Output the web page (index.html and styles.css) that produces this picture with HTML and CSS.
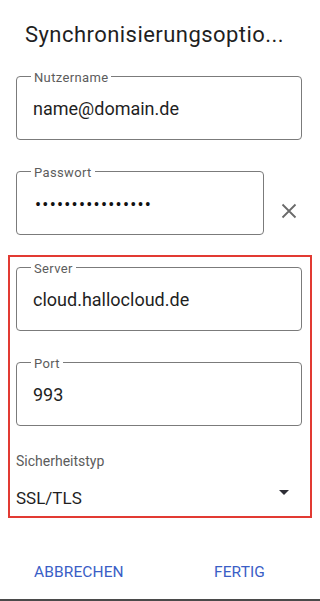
FILE: index.html
```html
<!DOCTYPE html>
<html lang="de">
<head>
<meta charset="utf-8">
<title>Synchronisierungsoptionen</title>
<link rel="stylesheet" href="styles.css">
</head>
<body>
<div class="dialog">
  <h1 class="title">Synchronisierungsoptio...</h1>

  <div class="form">
    <div class="field field-wide">
      <span class="field-label">Nutzername</span>
      <span class="field-value">name@domain.de</span>
    </div>

    <div class="row-pass">
      <div class="field field-narrow">
        <span class="field-label">Passwort</span>
        <span class="field-value dots">••••••••••••••••</span>
      </div>
      <button class="clear" aria-label="Löschen">
        <svg width="16" height="16" viewBox="0 0 16 16"><path d="M1.5 1.5 L14.5 14.5 M14.5 1.5 L1.5 14.5" stroke="#6a6a6a" stroke-width="1.8" fill="none"/></svg>
      </button>
    </div>
  </div>

  <div class="highlight">
    <div class="field field-wide">
      <span class="field-label">Server</span>
      <span class="field-value">cloud.hallocloud.de</span>
    </div>
    <div class="field field-wide gap-top">
      <span class="field-label">Port</span>
      <span class="field-value">993</span>
    </div>
    <div class="select-label">Sicherheitstyp</div>
    <div class="select">
      <span class="select-value">SSL/TLS</span>
      <span class="caret"></span>
    </div>
  </div>

  <div class="actions">
    <button class="action">ABBRECHEN</button>
    <button class="action">FERTIG</button>
  </div>

  <div class="bottom-bar"></div>
</div>
</body>
</html>
```

FILE: styles.css
```css
* { box-sizing: border-box; }

html, body {
  margin: 0;
  padding: 0;
  background: #ffffff;
}

body {
  font-family: Roboto, "Noto Sans", "Liberation Sans", sans-serif;
  color: #1f1f1f;
}

.dialog {
  display: flex;
  flex-direction: column;
  height: 601px;
}

.title {
  margin: 0;
  padding: 21px 0 0 25px;
  font-size: 22px;
  line-height: 28px;
  font-weight: 400;
  letter-spacing: 0.45px;
  color: #1f1f1f;
}

.form {
  padding: 27px 0 0 16px;
}

.field {
  position: relative;
  height: 64px;
  border: 1px solid #7b7b7b;
  border-radius: 4px;
  display: flex;
  align-items: center;
  padding: 0 0 0 16px;
}

.field-wide { width: 286px; }
.field-narrow { width: 248px; }

.field-label {
  position: absolute;
  top: -7px;
  left: 14px;
  padding: 0 3px;
  background: #ffffff;
  font-size: 13px;
  line-height: 16px;
  letter-spacing: 0.35px;
  color: #5c5c5c;
}

.field-value {
  font-size: 18px;
  line-height: 24px;
  color: #1f1f1f;
  padding-top: 2px;
}

.dots {
  font-size: 18px;
  letter-spacing: 1.25px;
  padding-left: 2px;
  padding-top: 4px;
  color: #111111;
}

.row-pass {
  display: flex;
  align-items: center;
  margin-top: 31px;
}

.clear {
  border: 0;
  background: none;
  padding: 0;
  margin: 16px 0 0 17px;
  width: 16px;
  height: 16px;
  display: flex;
}

.highlight {
  margin: 20px 8px 0 8px;
  border: 2px solid #e23a33;
  padding: 10px 8px 6px 6px;
}

.gap-top { margin-top: 31px; }

.select-label {
  margin-top: 25px;
  font-size: 14px;
  line-height: 20px;
  color: #5c5c5c;
}

.select {
  display: flex;
  justify-content: space-between;
  align-items: flex-start;
  margin-top: 15px;
  width: 286px;
}

.select-value {
  font-size: 17px;
  line-height: 24px;
  color: #1f1f1f;
}

.caret {
  width: 0;
  height: 0;
  margin: 4px 13px 0 0;
  border-left: 5px solid transparent;
  border-right: 5px solid transparent;
  border-top: 5px solid #2e2e35;
}

.actions {
  display: flex;
  justify-content: space-between;
  padding: 0 55px 0 34px;
  margin-top: 44px;
}

.action {
  border: 0;
  background: none;
  padding: 0;
  font-family: Roboto, "Noto Sans", "Liberation Sans", sans-serif;
  font-size: 15.5px;
  line-height: 20px;
  color: #3a5ec6;
  letter-spacing: 0.1px;
}

.bottom-bar {
  margin-top: auto;
  height: 2px;
  background: #4a4a4a;
}
```
